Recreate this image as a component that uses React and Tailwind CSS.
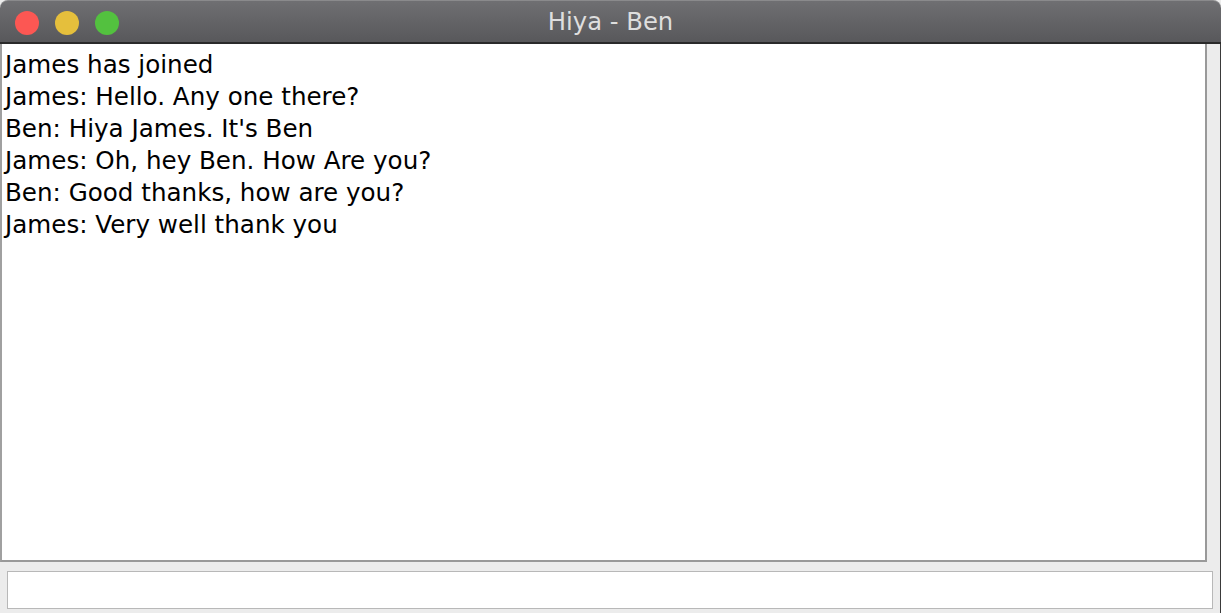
import React from "react";

const messages = [
  "James has joined",
  "James: Hello. Any one there?",
  "Ben: Hiya James. It's Ben",
  "James: Oh, hey Ben. How Are you?",
  "Ben: Good thanks, how are you?",
  "James: Very well thank you",
];

export default function App() {
  return (
    <div className="w-[1221px] h-[613px] flex flex-col overflow-hidden bg-[#ececec] font-['DejaVu_Sans',sans-serif]">
      {/* title bar */}
      <div className="relative h-[44px] shrink-0 flex items-center justify-center rounded-t-[8px] border-t border-[#8a8a8c] border-b-2 border-b-[#2a2a2a] bg-gradient-to-b from-[#6f6f72] to-[#58585b]">
        <div className="absolute left-[15px] top-[10px] flex gap-[16px]">
          <span className="w-[24px] h-[24px] rounded-full bg-[#fc5753]" />
          <span className="w-[24px] h-[24px] rounded-full bg-[#e5bf3c]" />
          <span className="w-[24px] h-[24px] rounded-full bg-[#53c13f]" />
        </div>
        <span className="text-[24.3px] text-[#dedede] leading-none pt-[1px]">Hiya - Ben</span>
      </div>

      {/* messages */}
      <div className="flex-1 flex pr-[13px] border-r border-r-[#3a3a3a]">
        <div className="flex-1 bg-white border-l-2 border-l-[#a0a0a0] border-r-2 border-r-[#999] border-b-2 border-b-[#999] pl-[3px] pt-[5px] text-[24.6px] leading-[32px] text-black">
          {messages.map((m) => (
            <div key={m}>{m}</div>
          ))}
        </div>
      </div>

      {/* input */}
      <div className="h-[51px] shrink-0 px-[7px] pt-[9px] pb-[4px] border-r border-r-[#3a3a3a]">
        <input className="w-full h-[38px] bg-white border border-[#b8b8b8] outline-none px-[4px]" />
      </div>
    </div>
  );
}
